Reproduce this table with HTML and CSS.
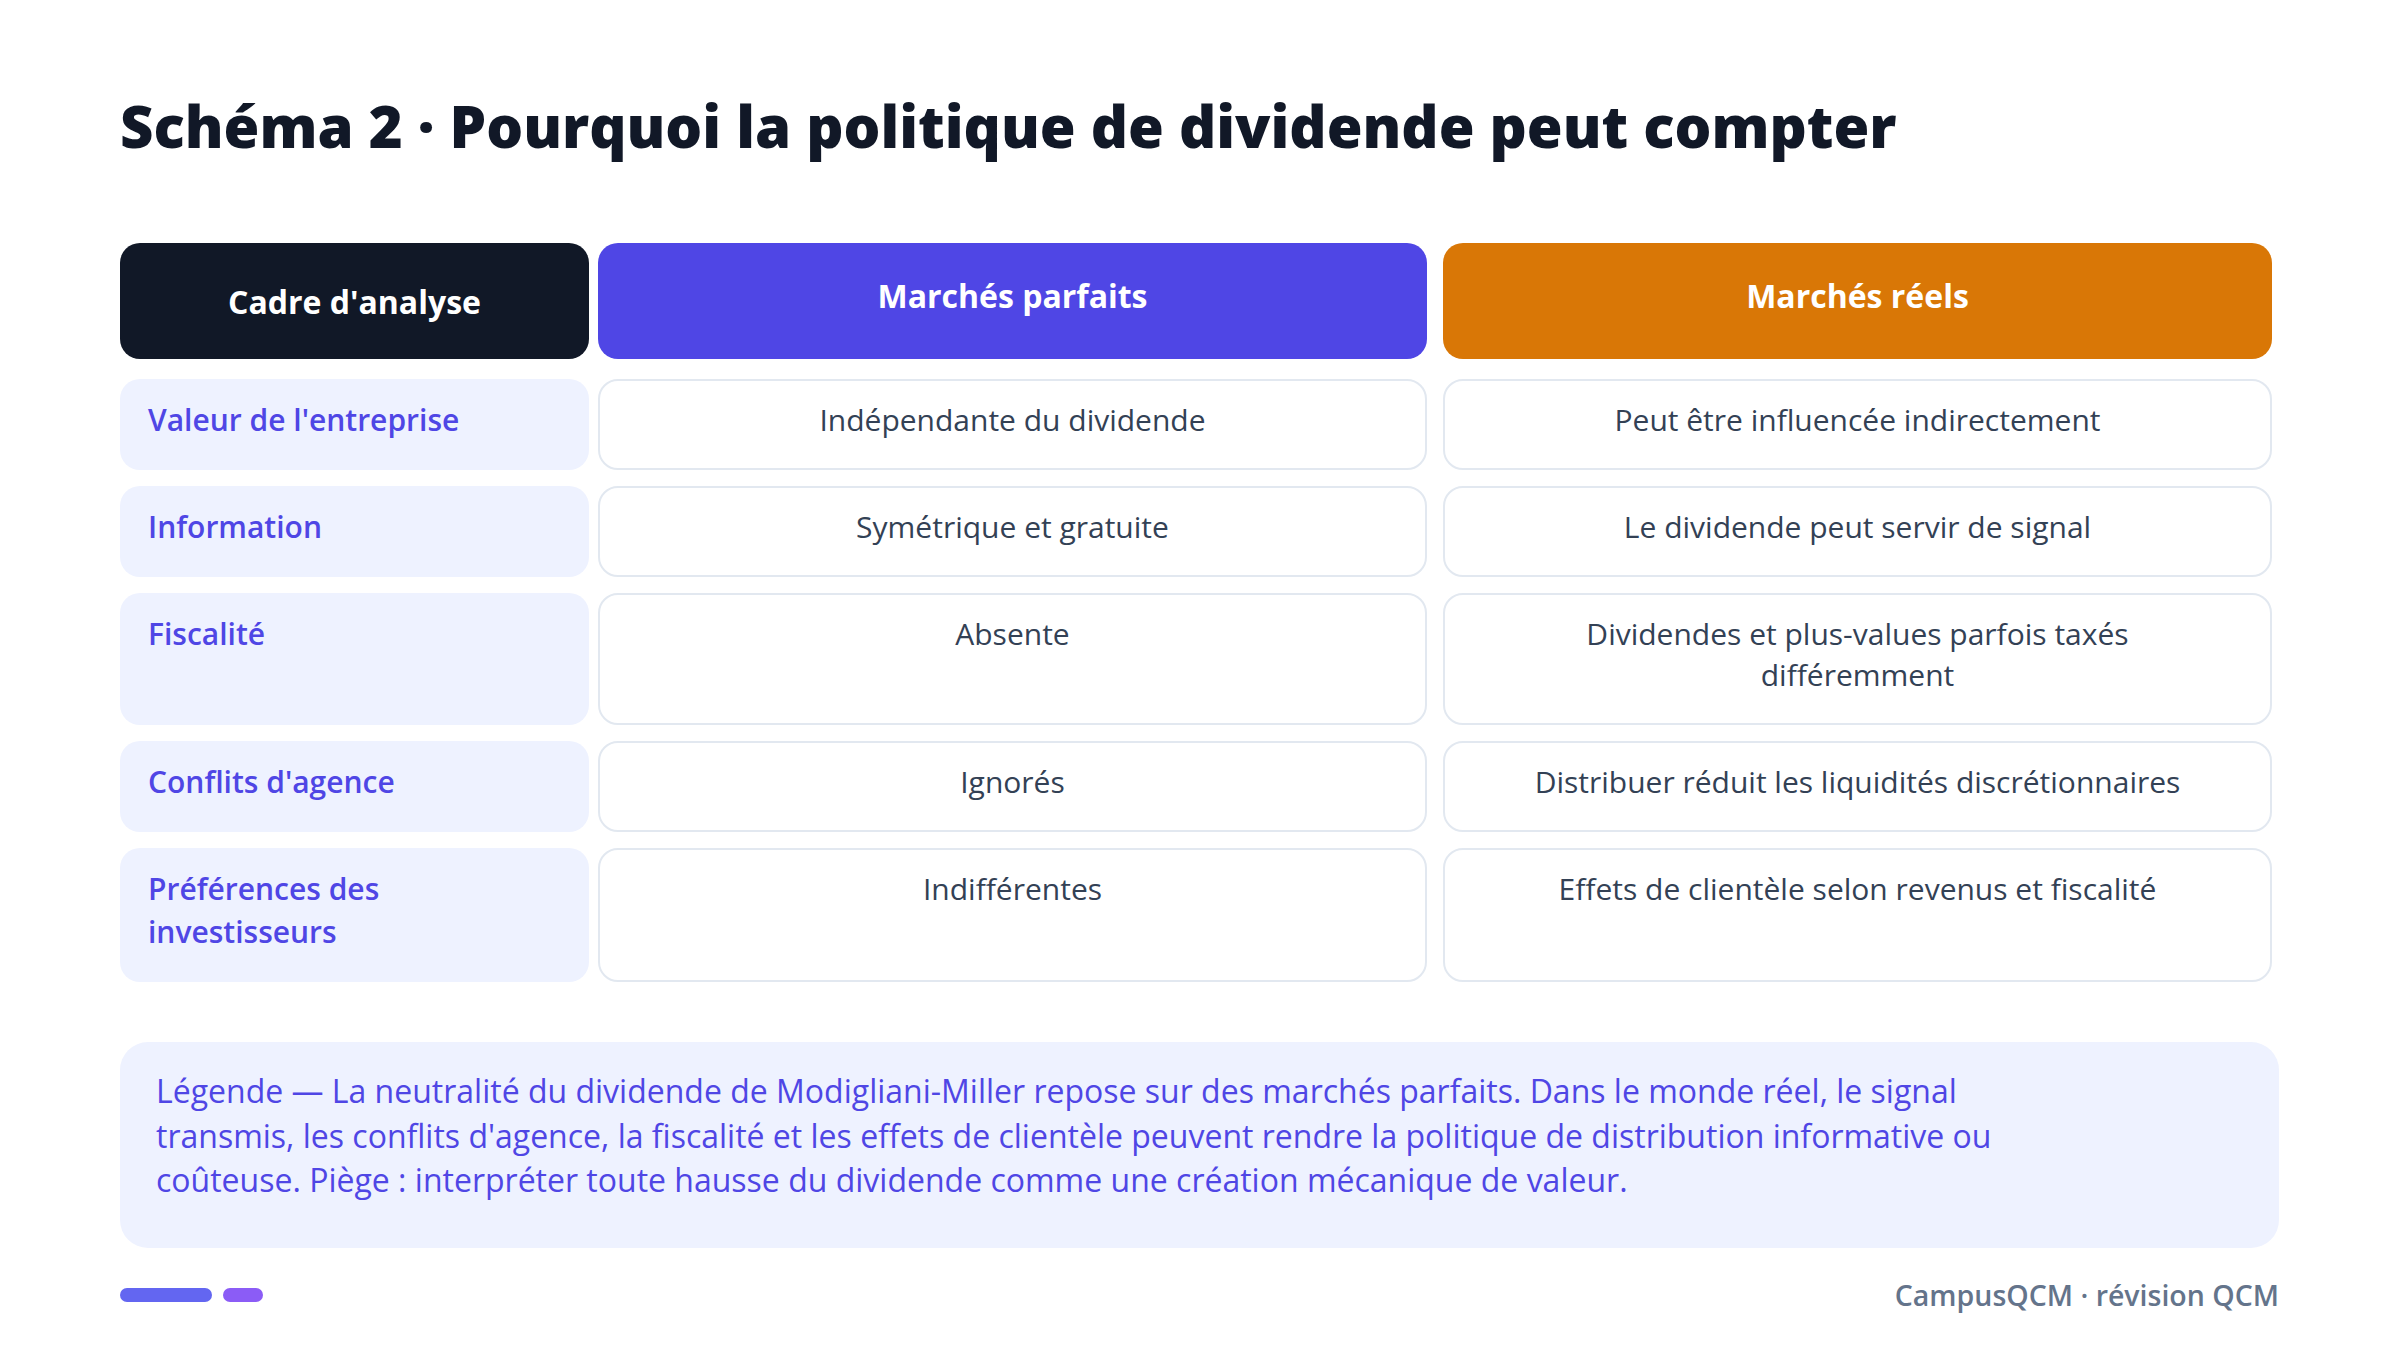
FILE: index.html
```html
<!DOCTYPE html>
<html lang="fr">
<head>
<meta charset="utf-8">
<title>Schéma 2</title>
<link rel="stylesheet" href="styles.css">
</head>
<body>
<div class="slide">
  <h1 class="title">Schéma 2 · Pourquoi la politique de dividende peut compter</h1>
  <div class="table">
    <div class="hd hd-dark">Cadre d'analyse</div>
    <div class="hd hd-indigo">Marchés parfaits</div>
    <div class="hd hd-amber c3">Marchés réels</div>

    <div class="lbl">Valeur de l'entreprise</div>
    <div class="val">Indépendante du dividende</div>
    <div class="val c3">Peut être influencée indirectement</div>

    <div class="lbl">Information</div>
    <div class="val">Symétrique et gratuite</div>
    <div class="val c3">Le dividende peut servir de signal</div>

    <div class="lbl">Fiscalité</div>
    <div class="val">Absente</div>
    <div class="val c3">Dividendes et plus-values parfois taxés différemment</div>

    <div class="lbl">Conflits d'agence</div>
    <div class="val">Ignorés</div>
    <div class="val c3">Distribuer réduit les liquidités discrétionnaires</div>

    <div class="lbl">Préférences des investisseurs</div>
    <div class="val">Indifférentes</div>
    <div class="val c3">Effets de clientèle selon revenus et fiscalité</div>
  </div>
  <div class="legend">
    <p>Légende — La neutralité du dividende de Modigliani-Miller repose sur des marchés parfaits. Dans le monde réel, le signal transmis, les conflits d'agence, la fiscalité et les effets de clientèle peuvent rendre la politique de distribution informative ou coûteuse. Piège : interpréter toute hausse du dividende comme une création mécanique de valeur.</p>
  </div>
  <div class="footer">
    <div class="bars"><span class="bar bar-a"></span><span class="bar bar-b"></span></div>
    <div class="brand">CampusQCM · révision QCM</div>
  </div>
</div>
</body>
</html>
```

FILE: styles.css
```css
* { box-sizing: border-box; }

body {
  margin: 0;
  background: #ffffff;
  font-family: "Open Sans", "Noto Sans", sans-serif;
}

.slide {
  width: 2400px;
  height: 1356px;
  padding: 91px 121px 0 120px;
}

.title {
  margin: 0;
  font-size: 58px;
  line-height: 70px;
  font-weight: 800;
  color: #111827;
}

.table {
  display: grid;
  grid-template-columns: 469px 829px 836px;
  column-gap: 9px;
  row-gap: 16px;
  margin-top: 82px;
  width: 2152px;
}

.c3 { margin-left: 7px; }

.hd {
  height: 116px;
  margin-bottom: 4px;
  border-radius: 20px;
  display: flex;
  align-items: center;
  justify-content: center;
  color: #ffffff;
  font-size: 32px;
  font-weight: 700;
  padding-bottom: 12px;
}

.hd-dark { background: #111827; padding-bottom: 0; }
.hd-indigo { background: #4f46e5; }
.hd-amber { background: #d97706; }

.lbl {
  background: #eef2ff;
  border-radius: 20px;
  color: #4f46e5;
  font-size: 30px;
  font-weight: 600;
  line-height: 43px;
  padding: 19px 28px 29px;
}

.val {
  background: #ffffff;
  border: 2px solid #e2e8f0;
  border-radius: 20px;
  color: #334155;
  font-size: 30px;
  line-height: 41px;
  text-align: center;
  padding: 18px 50px 28px;
}

.legend {
  margin-top: 60px;
  height: 206px;
  background: #eef2ff;
  border-radius: 28px;
  padding: 27px 36px;
}

.legend p {
  margin: 0;
  max-width: 1900px;
  color: #4f46e5;
  font-size: 32px;
  line-height: 44.5px;
}

.footer {
  margin-top: 27px;
  height: 40px;
  display: flex;
  align-items: center;
  justify-content: space-between;
}

.bars {
  display: flex;
  gap: 11px;
}

.bar {
  display: block;
  height: 14px;
  border-radius: 7px;
}

.bar-a { width: 92px; background: #6366f1; }
.bar-b { width: 40px; background: #8b5cf6; }

.brand {
  color: #64748b;
  font-size: 28.5px;
  font-weight: 600;
}
```
